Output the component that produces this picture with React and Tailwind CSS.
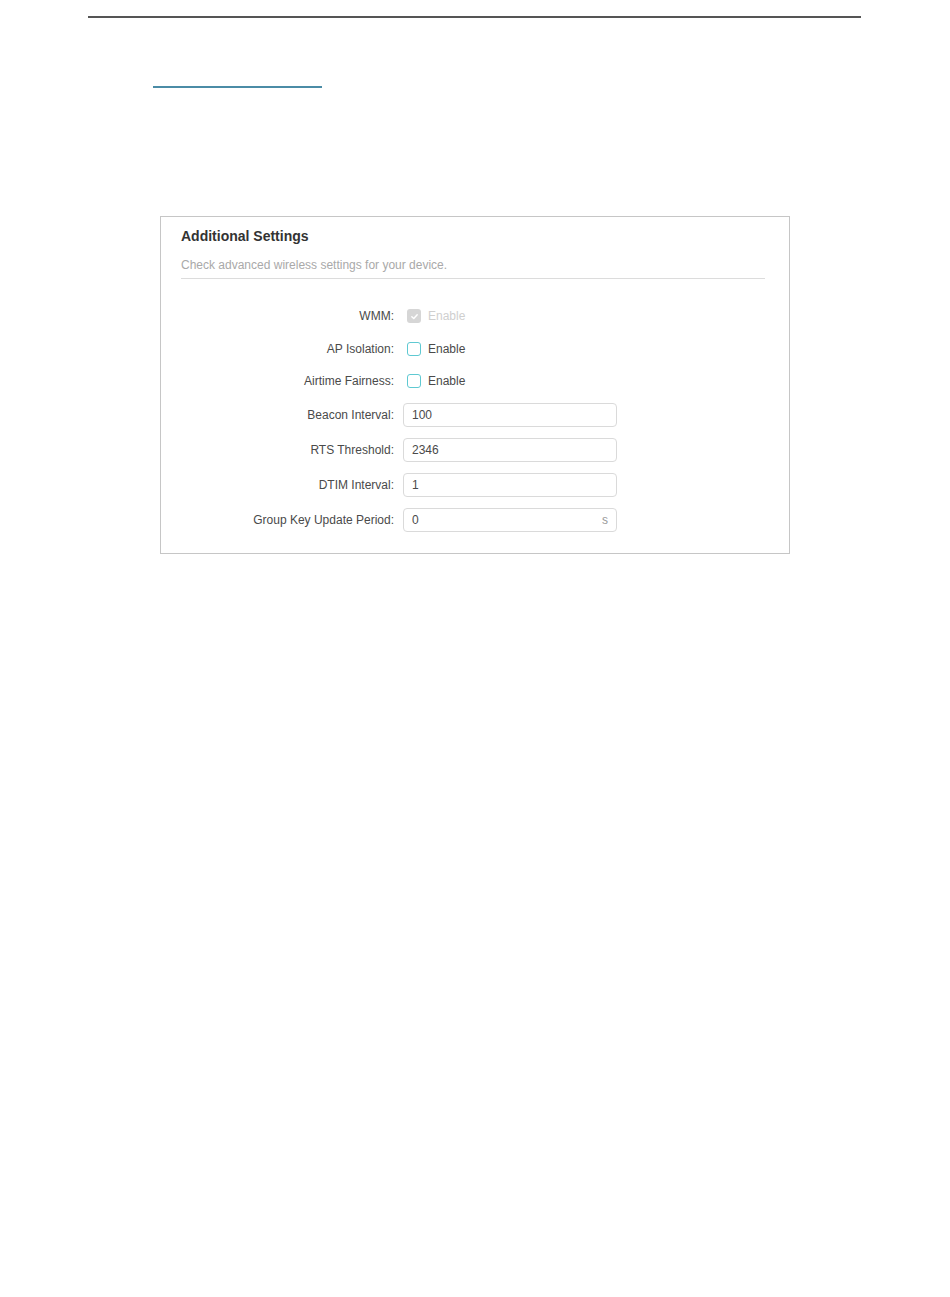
const rows = [
  { label: 'WMM:', type: 'check', checked: true, disabled: true, mt: 'mt-0' },
  { label: 'AP Isolation:', type: 'check', mt: 'mt-[9px]' },
  { label: 'Airtime Fairness:', type: 'check', mt: 'mt-[8px]' },
  { label: 'Beacon Interval:', type: 'input', value: '100', mt: 'mt-[10px]' },
  { label: 'RTS Threshold:', type: 'input', value: '2346', mt: 'mt-[11px]' },
  { label: 'DTIM Interval:', type: 'input', value: '1', mt: 'mt-[11px]' },
  { label: 'Group Key Update Period:', type: 'input', value: '0', unit: 's', mt: 'mt-[11px]' },
];

const CheckBox = ({ checked }) => (
  <span
    className={
      checked
        ? 'flex h-[14px] w-[14px] items-center justify-center rounded-[3px] bg-[#d6d6d6]'
        : 'block h-[14px] w-[14px] rounded-[3px] border border-[#5fc9d2] bg-white'
    }
  >
    {checked && (
      <svg width="9" height="9" viewBox="0 0 10 10" fill="none">
        <path d="M2 5.2 L4.2 7.3 L8 3" stroke="#ffffff" strokeWidth="1.6" strokeLinecap="round" strokeLinejoin="round" />
      </svg>
    )}
  </span>
);

const App = () => {
  return (
    <div className="min-h-[1297px] w-[950px] bg-white font-['Liberation_Sans','Arial',sans-serif]">
      {/* header rule */}
      <div className="pt-[16px]">
        <div className="ml-[88px] h-[2px] w-[773px] bg-[#555555]" />
      </div>
      <div className="mt-[68px] ml-[153px] h-[2px] w-[169px] bg-[#4b8ca6]" />

      {/* settings panel */}
      <div className="mt-[128px] ml-[160px] w-[630px] border border-[#c6c6c6] pb-[21px]">
        <div className="mx-[20px] mr-[24px] border-b border-[#dcdcdc] pt-[11px] pb-[6px]">
          <h2 className="text-[14px] leading-[17px] font-bold text-[#333333]">Additional Settings</h2>
          <p className="mt-[13px] text-[12px] leading-[14px] text-[#a9a9a9]">Check advanced wireless settings for your device.</p>
        </div>

        <div className="mt-[25px] flex flex-col">
          {rows.map((row) => (
            <div key={row.label} className={`${row.mt} flex h-[24px] items-center`}>
              <div className="w-[233px] text-right text-[12px] text-[#4a4a4a]">{row.label}</div>
              <div className="ml-[9px] flex items-center">
                {row.type === 'check' ? (
                  <div className="ml-[4px] flex items-center gap-[7px]">
                    <CheckBox checked={row.checked} />
                    <span className={`text-[12px] ${row.disabled ? 'text-[#cfcfcf]' : 'text-[#4a4a4a]'}`}>Enable</span>
                  </div>
                ) : (
                  <div className="flex h-[24px] w-[214px] items-center justify-between rounded-[4px] border border-[#dadada] px-[8px]">
                    <span className="text-[12px] text-[#4a4a4a]">{row.value}</span>
                    {row.unit && <span className="text-[12px] text-[#9a9a9a]">{row.unit}</span>}
                  </div>
                )}
              </div>
            </div>
          ))}
        </div>
      </div>
    </div>
  );
};

export default App;
